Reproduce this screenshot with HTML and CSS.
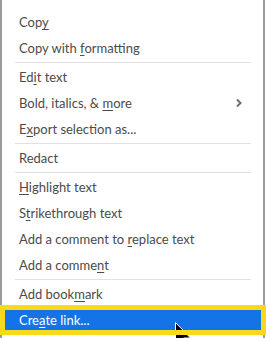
FILE: index.html
```html
<!DOCTYPE html>
<html>
<head>
<meta charset="utf-8">
<link rel="stylesheet" href="styles.css">
</head>
<body>
<div class="menu">
  <div class="item"><span>Cop<u>y</u></span></div>
  <div class="item"><span>Copy with <u>f</u>ormatting</span></div>
  <div class="sep"></div>
  <div class="item"><span>Ed<u>i</u>t text</span></div>
  <div class="item"><span>Bold, italics, &amp; <u>m</u>ore</span>
    <svg class="chev" width="8" height="10" viewBox="0 0 8 10"><path d="M2 1.5 L5.5 5 L2 8.5" fill="none" stroke="#707070" stroke-width="2"/></svg>
  </div>
  <div class="item"><span>E<u>x</u>port selection as...</span></div>
  <div class="sep"></div>
  <div class="item"><span>Redact</span></div>
  <div class="sep"></div>
  <div class="item"><span><u>H</u>ighlight text</span></div>
  <div class="item"><span>S<u>t</u>rikethrough text</span></div>
  <div class="item"><span>Add a comment to <u>r</u>eplace text</span></div>
  <div class="item"><span>Add a comme<u>n</u>t</span></div>
  <div class="sep"></div>
  <div class="item"><span>Add book<u>m</u>ark</span></div>
  <div class="item active"><span>Cre<u>a</u>te link...</span></div>
</div>
<svg class="cursor" width="20" height="28" viewBox="0 0 20 28"><path d="M0.5 0.5 L0.5 22 L5.5 17 L9.5 26 L12.5 24.8 L8.6 16 L15.5 16 Z" fill="#000" stroke="#fff" stroke-width="1"/></svg>
<div class="callout"></div>
</body>
</html>
```
FILE: styles.css
```css
html, body {
  margin: 0;
  padding: 0;
  background: #fff;
  overflow: hidden;
}
body {
  width: 266px;
  height: 338px;
  position: relative;
  font-family: "Lato", "Noto Sans", sans-serif;
}
.menu {
  width: 261px;
  height: 338px;
  border-left: 2px solid #9b9b9b;
  border-right: 2px solid #9b9b9b;
  padding-top: 9px;
  box-sizing: content-box;
}
.item {
  height: 26px;
  padding-left: 17px;
  padding-right: 20px;
  font-size: 13px;
  color: #4b4b4b;
  white-space: nowrap;
  display: flex;
  align-items: center;
}
.item span {
  white-space: pre;
}
.item u {
  text-decoration-thickness: 1px;
  text-underline-offset: 2px;
}
.chev {
  display: block;
  margin-left: auto;
}
.sep {
  height: 1px;
  background: #e1e1e1;
  margin: 1px 12px 1px 13px;
}
.active {
  background: #1473e6;
  color: #fff;
}
.cursor {
  position: absolute;
  left: 175px;
  top: 322px;
}
.callout {
  position: absolute;
  left: 0;
  top: 305px;
  width: 266px;
  height: 30px;
  box-sizing: border-box;
  border: 5px solid #f8da1a;
}
```
